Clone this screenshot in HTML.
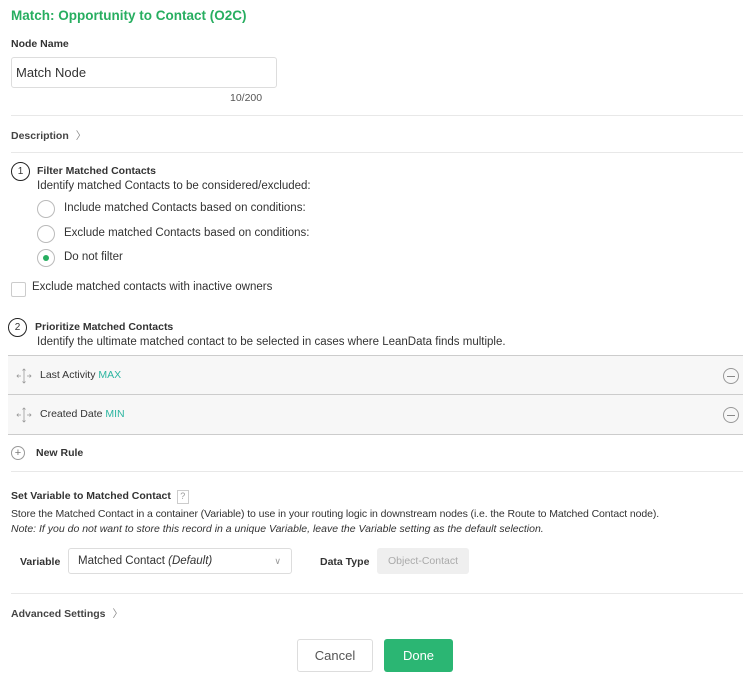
<!DOCTYPE html>
<html><head><meta charset="utf-8"><style>
body{margin:0;width:751px;height:684px;background:#fff;font-family:"Liberation Sans",sans-serif;color:#333;position:relative;overflow:hidden}
.a{position:absolute;white-space:nowrap}
.b{font-weight:bold}
.s11{font-size:10.5px}.s12{font-size:11.5px}
.hr{position:absolute;left:11px;width:732px;height:1px;background:#e8e8e8}
.radio{position:absolute;width:16px;height:16px;border:1px solid #bbb;border-radius:50%;left:37px;background:#fff}
.num{position:absolute;width:17px;height:17px;border:1px solid #222;border-radius:50%;font-size:10px;text-align:center;line-height:17px}
.g{color:#2bb5a0}
.row{position:absolute;left:8px;width:735px;height:39px;background:#f7f7f7;border-top:1px solid #ccc}
.minus{position:absolute;right:4px;top:12px;width:14px;height:14px;border:1px solid #999;border-radius:50%}
.minus:after{content:"";position:absolute;left:3px;right:3px;top:6.5px;height:1px;background:#888}
.mv{position:absolute;left:8px;top:12px}
</style></head><body>
<div class="a b" style="left:11px;top:8px;font-size:13.5px;color:#27ae60">Match: Opportunity to Contact (O2C)</div>
<div class="a b s11" style="left:11px;top:38px">Node Name</div>
<div class="a" style="left:11px;top:57px;border:1px solid #ddd;border-radius:3px;font-size:13px;line-height:29px;padding-left:4px;box-sizing:border-box;width:266px;height:31px">Match Node</div>
<div class="a s11" style="left:230px;top:92px;color:#555">10/200</div>
<div class="hr" style="top:115px"></div>
<div class="a b s11" style="left:11px;top:128px;color:#444">Description <span style="font-weight:normal;color:#888;margin-left:4px">〉</span></div>
<div class="hr" style="top:152px"></div>
<div class="num" style="left:11px;top:162px">1</div>
<div class="a b s11" style="left:37px;top:165px">Filter Matched Contacts</div>
<div class="a s12" style="left:37px;top:180px">Identify matched Contacts to be considered/excluded:</div>
<div class="radio" style="top:200px"></div><div class="a s12" style="left:64px;top:202px">Include matched Contacts based on conditions:</div>
<div class="radio" style="top:225px"></div><div class="a s12" style="left:64px;top:227px">Exclude matched Contacts based on conditions:</div>
<div class="radio" style="top:249px"><div style="position:absolute;left:5px;top:5px;width:6px;height:6px;border-radius:50%;background:#27ae60"></div></div><div class="a s12" style="left:64px;top:251px">Do not filter</div>
<div class="a" style="left:11px;top:282px;width:13px;height:13px;border:1px solid #ccc;border-radius:2px"></div>
<div class="a s12" style="left:32px;top:281px">Exclude matched contacts with inactive owners</div>
<div class="num" style="left:8px;top:318px">2</div>
<div class="a b s11" style="left:35px;top:321px">Prioritize Matched Contacts</div>
<div class="a s12" style="left:37px;top:336px">Identify the ultimate matched contact to be selected in cases where LeanData finds multiple.</div>
<div class="row" style="top:355px"><svg class="mv" width="16" height="16" viewBox="0 0 16 16" fill="none" stroke="#999" stroke-width="0.8"><path d="M8 1v14M1 8h4M11 8h4M6.5 2.5L8 1l1.5 1.5M6.5 13.5L8 15l1.5-1.5M2.5 6.5L1 8l1.5 1.5M13.5 6.5L15 8l-1.5 1.5"/></svg><div class="a s11" style="left:32px;top:13px">Last Activity <span class="g">MAX</span></div><div class="minus"></div></div>
<div class="row" style="top:394px;border-bottom:1px solid #ccc"><svg class="mv" width="16" height="16" viewBox="0 0 16 16" fill="none" stroke="#999" stroke-width="0.8"><path d="M8 1v14M1 8h4M11 8h4M6.5 2.5L8 1l1.5 1.5M6.5 13.5L8 15l1.5-1.5M2.5 6.5L1 8l1.5 1.5M13.5 6.5L15 8l-1.5 1.5"/></svg><div class="a s11" style="left:32px;top:13px">Created Date <span class="g">MIN</span></div><div class="minus"></div></div>
<div class="a" style="left:11px;top:446px;width:12px;height:12px;border:1px solid #999;border-radius:50%;font-size:11px;line-height:12px;text-align:center;color:#777">+</div>
<div class="a b s11" style="left:36px;top:447px">New Rule</div>
<div class="hr" style="top:471px"></div>
<div class="a b s11" style="left:11px;top:490px">Set Variable to Matched Contact <span style="display:inline-block;width:10px;height:12px;border:1px solid #ccc;font-weight:normal;color:#999;font-size:9px;text-align:center;margin-left:3px">?</span></div>
<div class="a s11" style="left:11px;top:508px;letter-spacing:-0.1px">Store the Matched Contact in a container (Variable) to use in your routing logic in downstream nodes (i.e. the Route to Matched Contact node).</div>
<div class="a s11" style="left:11px;top:523px;font-style:italic">Note: If you do not want to store this record in a unique Variable, leave the Variable setting as the default selection.</div>
<div class="a b s11" style="left:20px;top:556px">Variable</div>
<div class="a s12" style="left:68px;top:548px;width:224px;height:26px;border:1px solid #ddd;border-radius:3px;box-sizing:border-box;line-height:25px;padding-left:9px">Matched Contact <i>(Default)</i><span style="position:absolute;right:10px;color:#999;font-size:9px">&#8744;</span></div>
<div class="a b s11" style="left:320px;top:556px">Data Type</div>
<div class="a s11" style="left:377px;top:548px;width:92px;height:26px;background:#efefef;border-radius:3px;line-height:26px;text-align:center;color:#aaa">Object-Contact</div>
<div class="hr" style="top:593px"></div>
<div class="a b s11" style="left:11px;top:606px;color:#444">Advanced Settings <span style="font-weight:normal;color:#888;margin-left:4px">〉</span></div>
<div class="a" style="left:297px;top:639px;width:76px;height:33px;border:1px solid #ddd;border-radius:3px;box-sizing:border-box;text-align:center;line-height:31px;font-size:13px;color:#555">Cancel</div>
<div class="a" style="left:384px;top:639px;width:69px;height:33px;background:#2bb673;border-radius:3px;text-align:center;line-height:33px;font-size:13px;color:#fff">Done</div>
</body></html>
